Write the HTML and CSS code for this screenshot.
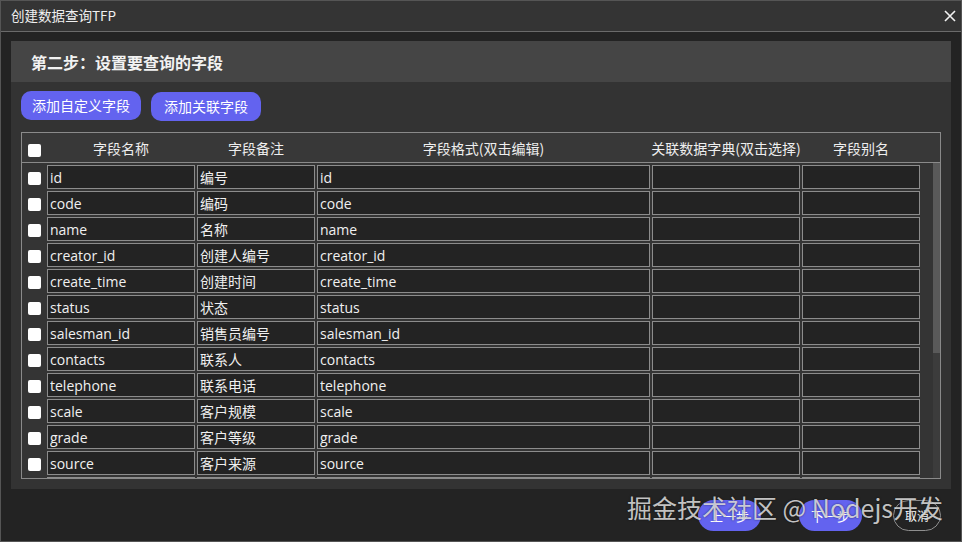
FILE: index.html
```html
<!DOCTYPE html>
<html lang="zh-CN">
<head>
<meta charset="utf-8">
<title>创建数据查询TFP</title>
<link rel="stylesheet" href="styles.css">
</head>
<body>
<div class="window">
  <div class="titlebar">
    <span class="title">创建数据查询TFP</span>
    <svg class="close" width="12" height="12" viewBox="0 0 12 12"><path d="M1 1 L11 11 M11 1 L1 11" stroke="#f2f2f2" stroke-width="1.6" fill="none"/></svg>
  </div>
  <div class="content">
    <div class="panel">
      <div class="panel-head">第二步：设置要查询的字段</div>
      <div class="actions">
        <button class="btn btn-a">添加自定义字段</button>
        <button class="btn btn-b">添加关联字段</button>
      </div>
      <div class="table">
        <div class="thead grid">
          <div class="cbcell"><input type="checkbox" class="cb"></div>
          <div class="th"><span>字段名称</span></div>
          <div class="th"><span>字段备注</span></div>
          <div class="th"><span>字段格式(双击编辑)</span></div>
          <div class="th"><span>关联数据字典(双击选择)</span></div>
          <div class="th"><span>字段别名</span></div>
        </div>
        <div class="tbody">
          <div class="rows">
            <div class="grid row"><div class="cbcell"><input type="checkbox" class="cb"></div><input class="cell" value="id"><input class="cell" value="编号"><input class="cell" value="id"><input class="cell" value=""><input class="cell" value=""></div>
            <div class="grid row"><div class="cbcell"><input type="checkbox" class="cb"></div><input class="cell" value="code"><input class="cell" value="编码"><input class="cell" value="code"><input class="cell" value=""><input class="cell" value=""></div>
            <div class="grid row"><div class="cbcell"><input type="checkbox" class="cb"></div><input class="cell" value="name"><input class="cell" value="名称"><input class="cell" value="name"><input class="cell" value=""><input class="cell" value=""></div>
            <div class="grid row"><div class="cbcell"><input type="checkbox" class="cb"></div><input class="cell" value="creator_id"><input class="cell" value="创建人编号"><input class="cell" value="creator_id"><input class="cell" value=""><input class="cell" value=""></div>
            <div class="grid row"><div class="cbcell"><input type="checkbox" class="cb"></div><input class="cell" value="create_time"><input class="cell" value="创建时间"><input class="cell" value="create_time"><input class="cell" value=""><input class="cell" value=""></div>
            <div class="grid row"><div class="cbcell"><input type="checkbox" class="cb"></div><input class="cell" value="status"><input class="cell" value="状态"><input class="cell" value="status"><input class="cell" value=""><input class="cell" value=""></div>
            <div class="grid row"><div class="cbcell"><input type="checkbox" class="cb"></div><input class="cell" value="salesman_id"><input class="cell" value="销售员编号"><input class="cell" value="salesman_id"><input class="cell" value=""><input class="cell" value=""></div>
            <div class="grid row"><div class="cbcell"><input type="checkbox" class="cb"></div><input class="cell" value="contacts"><input class="cell" value="联系人"><input class="cell" value="contacts"><input class="cell" value=""><input class="cell" value=""></div>
            <div class="grid row"><div class="cbcell"><input type="checkbox" class="cb"></div><input class="cell" value="telephone"><input class="cell" value="联系电话"><input class="cell" value="telephone"><input class="cell" value=""><input class="cell" value=""></div>
            <div class="grid row"><div class="cbcell"><input type="checkbox" class="cb"></div><input class="cell" value="scale"><input class="cell" value="客户规模"><input class="cell" value="scale"><input class="cell" value=""><input class="cell" value=""></div>
            <div class="grid row"><div class="cbcell"><input type="checkbox" class="cb"></div><input class="cell" value="grade"><input class="cell" value="客户等级"><input class="cell" value="grade"><input class="cell" value=""><input class="cell" value=""></div>
            <div class="grid row"><div class="cbcell"><input type="checkbox" class="cb"></div><input class="cell" value="source"><input class="cell" value="客户来源"><input class="cell" value="source"><input class="cell" value=""><input class="cell" value=""></div>
            <div class="grid row"><div class="cbcell"><input type="checkbox" class="cb"></div><input class="cell" value="industry"><input class="cell" value="所属行业"><input class="cell" value="industry"><input class="cell" value=""><input class="cell" value=""></div>
          </div>
          <div class="scrollbar"><div class="thumb"></div></div>
        </div>
      </div>
    </div>
    <div class="footer">
      <button class="fbtn fbtn-prev">上一步</button>
      <button class="fbtn fbtn-next">下一步</button>
      <button class="fbtn fbtn-cancel">取消</button>
    </div>
  </div>
  <div class="watermark">掘金技术社区 @ Nodejs开发</div>
</div>
</body>
</html>
```
FILE: styles.css
```css
* { box-sizing: border-box; }
html, body { margin: 0; padding: 0; }
body {
  width: 962px;
  height: 542px;
  background: #232323;
  font-family: "Open Sans", "Noto Sans CJK SC", sans-serif;
  color: #eeeeee;
  overflow: hidden;
}
.window {
  position: relative;
  width: 962px;
  height: 542px;
  border: 1px solid #555555;
  background: #232323;
}
.titlebar {
  height: 31px;
  background: #343434;
  border-bottom: 1px solid #6a6a6a;
  display: flex;
  align-items: center;
  justify-content: space-between;
  padding: 0 5px 0 10px;
}
.title {
  font-family: "Noto Sans CJK SC", sans-serif;
  font-size: 13.5px;
  color: #f0f0f0;
  line-height: 1;
}
.close { display: block; }
.content {
  padding: 9px 10px 0 10px;
}
.panel {
  background: #333333;
  padding-bottom: 10px;
}
.panel-head {
  height: 41px;
  background: #454545;
  display: flex;
  align-items: center;
  padding-left: 20px;
  font-family: "Noto Sans CJK SC", sans-serif;
  font-weight: 700;
  font-size: 16px;
  color: #f2f2f2;
}
.actions {
  display: flex;
  gap: 10px;
  padding: 9px 10px 0 10px;
  height: 38px;
  align-items: flex-start;
}
.btn {
  height: 29px;
  border: none;
  border-radius: 10px;
  background: #6363ef;
  color: #ffffff;
  font-family: "Noto Sans CJK SC", sans-serif;
  font-size: 14px;
  line-height: 29px;
  padding: 0 11px;
  cursor: pointer;
}
.btn-b { padding: 0 13px; margin-top: 1px; }
.table {
  margin: 12px 10px 0 10px;
  border: 1px solid #8a8a8a;
  background: #343434;
}
.grid {
  display: grid;
  grid-template-columns: 23px 148px 118px 333px 148px 118px;
  column-gap: 2px;
}
.thead {
  height: 30px;
  border-bottom: 1px solid #8a8a8a;
  align-items: center;
  background: #383838;
}
.th {
  display: flex;
  justify-content: center;
  white-space: nowrap;
  font-family: "Noto Sans CJK SC", sans-serif;
  font-size: 14px;
  color: #eeeeee;
  line-height: 1;
  padding-top: 1px;
}
.cbcell {
  display: flex;
  justify-content: flex-end;
  align-items: center;
  padding-top: 3px;
  padding-right: 4px;
}
.thead .cbcell { padding-top: 6px; }
.cb {
  appearance: none;
  -webkit-appearance: none;
  width: 13px;
  height: 13px;
  margin: 0;
  background: #ffffff;
  border-radius: 2px;
  border: none;
}
.tbody {
  height: 315px;
  display: flex;
  overflow: hidden;
}
.rows {
  flex: 1;
  padding-top: 2px;
  display: flex;
  flex-direction: column;
  gap: 2px;
}
.row { height: 24px; flex: none; }
.cell {
  height: 24px;
  width: 100%;
  margin: 0;
  border: 1px solid #8c8c8c;
  background: #232323;
  color: #f0f0f0;
  font-family: "Open Sans", "Noto Sans CJK SC", sans-serif;
  font-size: 14px;
  padding: 0 2px;
  outline: none;
}
.scrollbar {
  width: 7px;
  flex: none;
  background: #3c3c3c;
}
.thumb {
  height: 190px;
  background: #595959;
}
.footer {
  display: flex;
  justify-content: flex-end;
  padding: 11px 10px 0 0;
}
.fbtn {
  height: 31px;
  border-radius: 16px;
  font-family: "Noto Sans CJK SC", sans-serif;
  font-size: 13px;
  color: #ffffff;
  cursor: pointer;
  padding: 0;
}
.fbtn-prev, .fbtn-next {
  width: 63px;
  background: #6363ef;
  border: none;
}
.fbtn-next { margin-left: 38px; }
.fbtn-cancel {
  width: 48px;
  margin-left: 31px;
  background: transparent;
  border: 1px solid #8f8f8f;
  font-size: 12px;
}
.watermark {
  position: absolute;
  left: 626px;
  top: 490px;
  font-family: "Noto Sans CJK SC", sans-serif;
  font-size: 25px;
  line-height: 32px;
  color: rgba(235, 235, 235, 0.82);
  text-shadow: 0 0 2px rgba(0, 0, 0, 0.6);
  white-space: nowrap;
  pointer-events: none;
}
```
